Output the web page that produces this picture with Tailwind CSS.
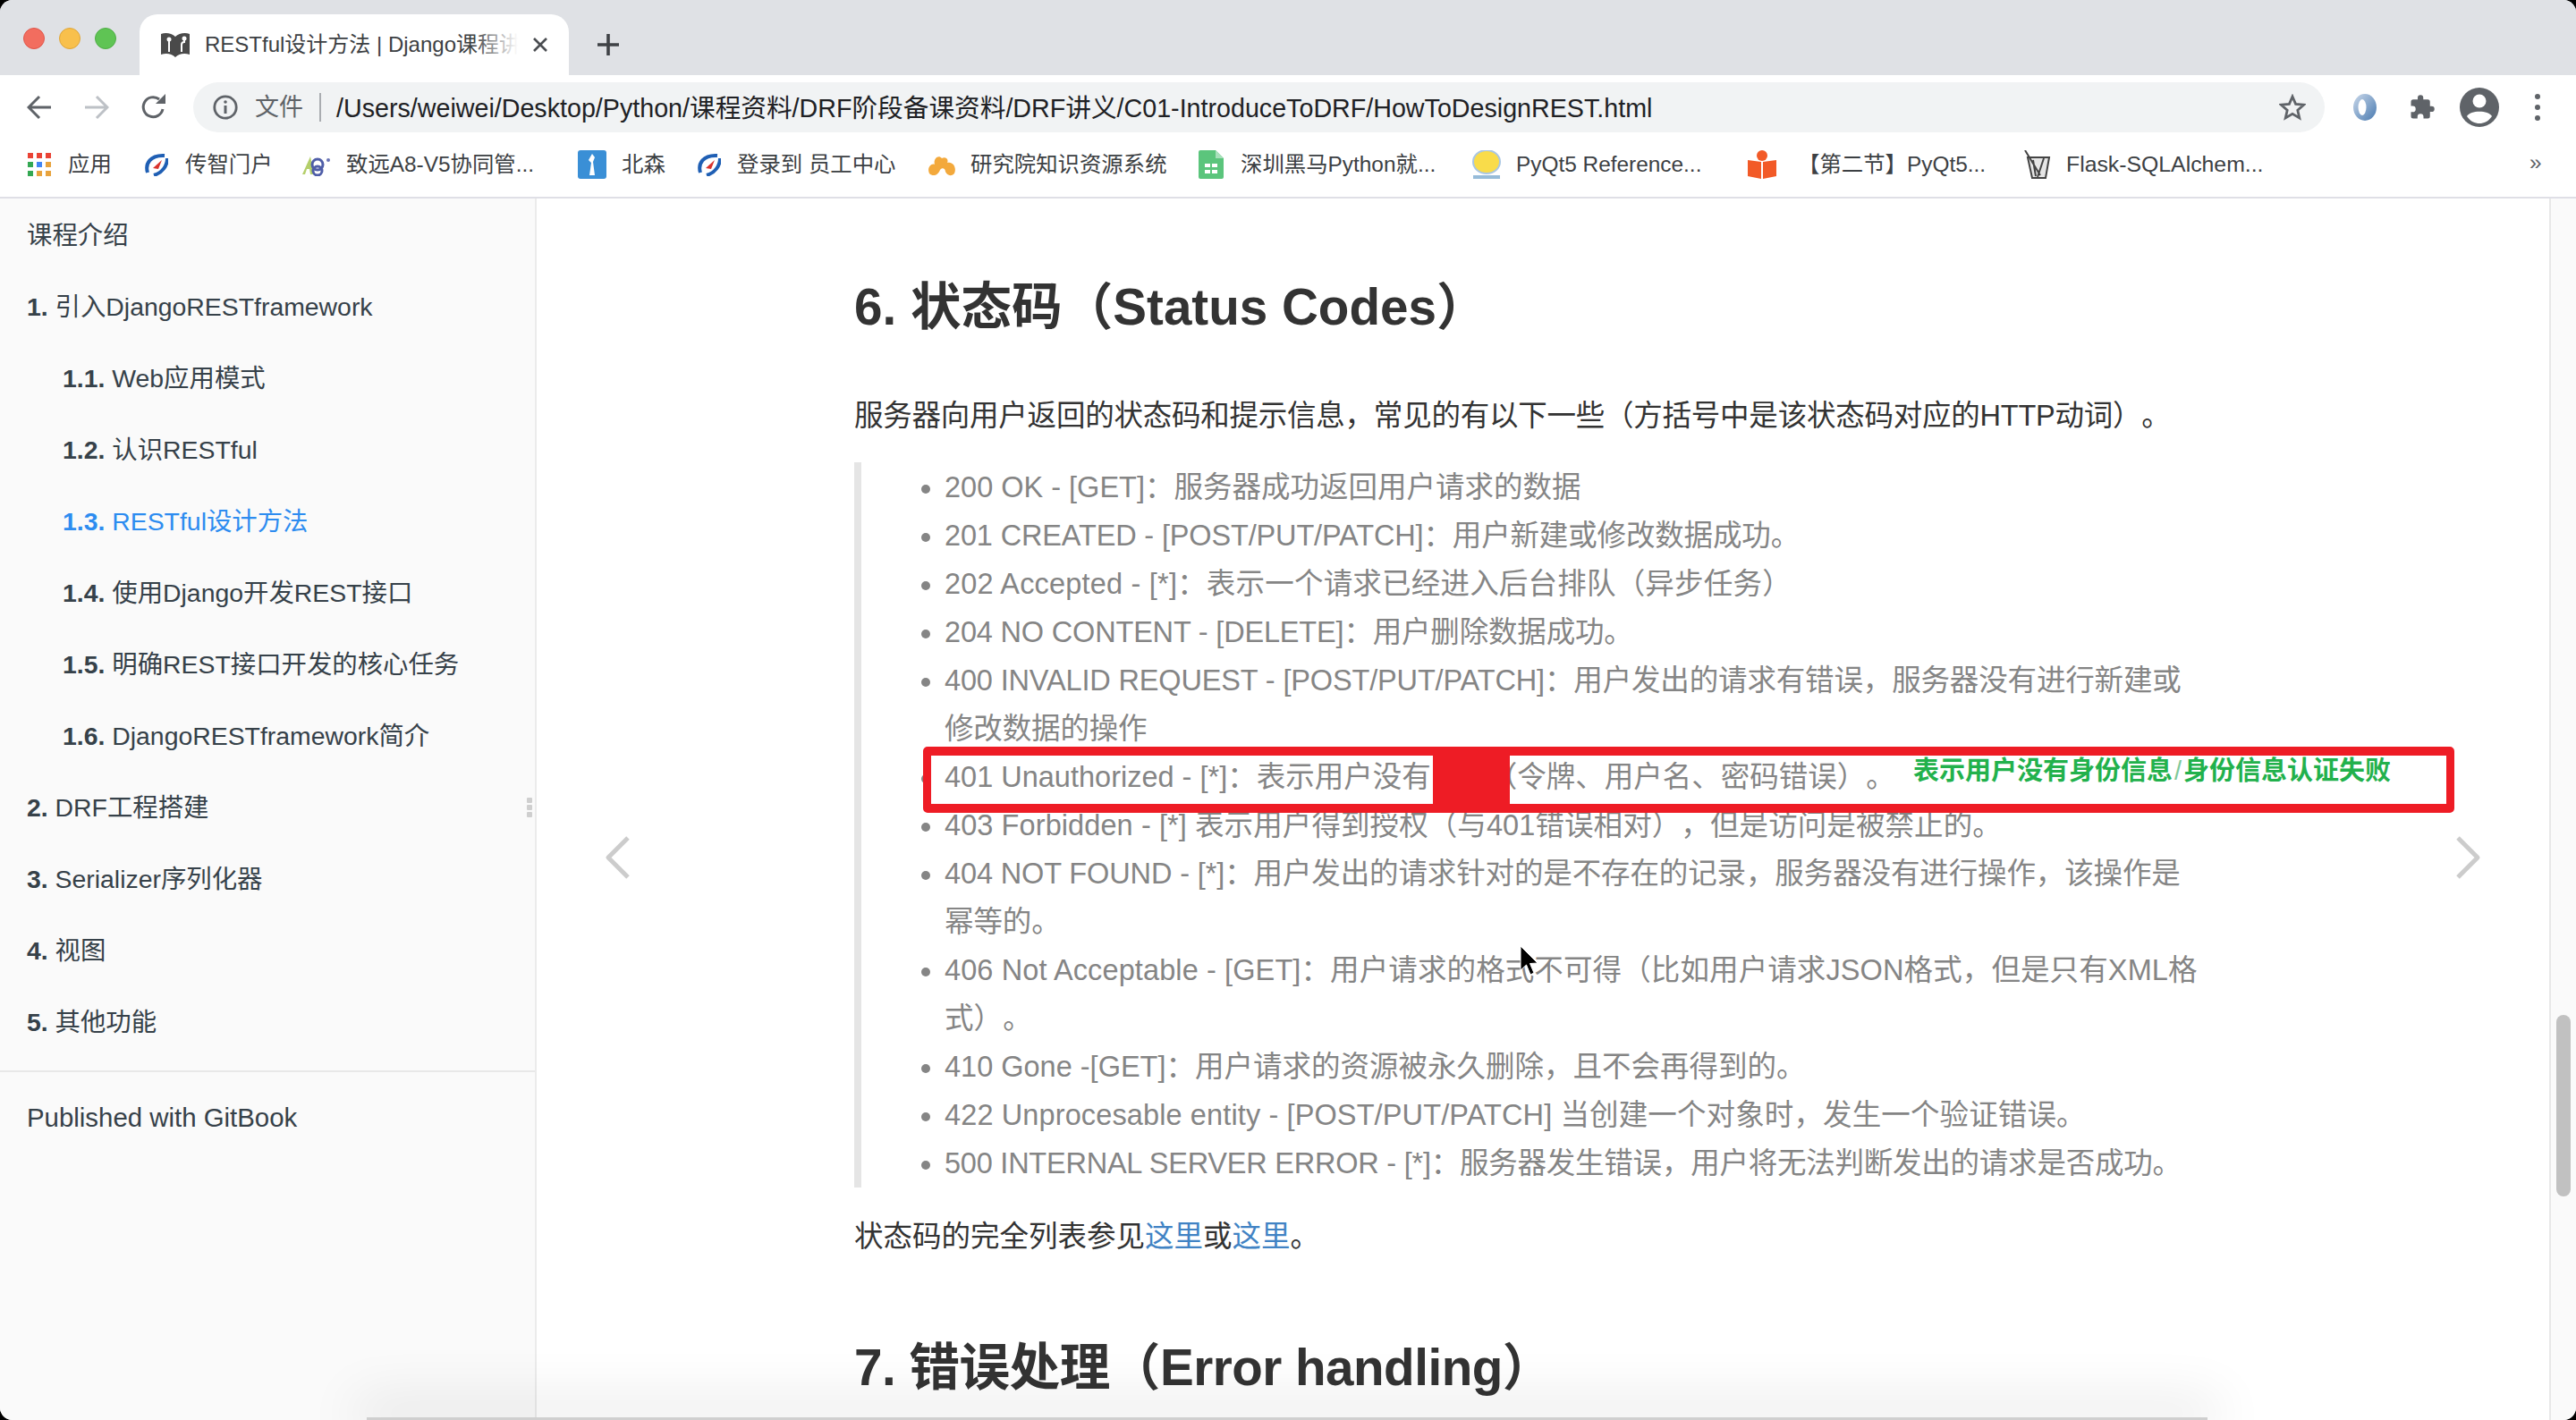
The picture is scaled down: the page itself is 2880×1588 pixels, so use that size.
<!doctype html>
<html lang="zh-CN">
<head>
<meta charset="utf-8">
<title>RESTful设计方法 | Django课程讲义</title>
<script src="https://cdn.jsdelivr.net/npm/@tailwindcss/browser@4"></script>
</head>
<body class="bg-black m-0">
<div class="relative w-[2880px] h-[1588px] overflow-hidden rounded-[14px] bg-white flex flex-col [text-spacing-trim:space-all] font-['Liberation_Sans','Noto_Sans_CJK_SC',sans-serif]">

  <!-- Tab strip -->
  <div class="h-[84px] shrink-0 bg-[#dfe1e5] flex items-end">
    <div class="w-[156px] h-[68px] shrink-0 flex items-start gap-[16px] pl-[26px] pt-[15px]">
      <span class="w-[24px] h-[24px] rounded-full bg-[#f26d5f] border border-[#e0564a]"></span>
      <span class="w-[24px] h-[24px] rounded-full bg-[#f8c04c] border border-[#dfa63a]"></span>
      <span class="w-[24px] h-[24px] rounded-full bg-[#5fc454] border border-[#4fae46]"></span>
    </div>
    <div class="w-[480px] h-[68px] shrink-0 bg-white rounded-t-[20px] flex items-center pl-[24px] relative">
      <svg width="32" height="28" viewBox="0 0 32 28" class="shrink-0">
        <path d="M0 2 C5 0 12 1 16 5 C20 1 27 0 32 2 V25 C26 23 20 24 16 28 C12 24 6 23 0 25 Z" fill="#4a4a4a"/>
        <path d="M9 22 V9 M23 22 V14 Q23 11 26 11 V7" stroke="#fff" stroke-width="2" fill="none"/>
        <circle cx="9" cy="8" r="2.5" fill="#fff"/><circle cx="26" cy="7" r="2.5" fill="#fff"/>
      </svg>
      <div class="ml-[17px] w-[350px] overflow-hidden whitespace-nowrap text-[24px] leading-[34px] text-[#3c4043] relative">RESTful设计方法 | Django课程讲义
        <span class="absolute right-0 top-0 h-full w-[50px] bg-linear-to-r from-white/0 to-white"></span>
      </div>
      <svg width="20" height="20" viewBox="0 0 20 20" class="absolute left-[438px] top-[24px]"><path d="M3 3 L17 17 M17 3 L3 17" stroke="#4a4d51" stroke-width="2.6"/></svg>
    </div>
    <div class="ml-[32px] h-[68px] flex items-center">
      <svg width="24" height="24" viewBox="0 0 24 24"><path d="M12 0 V24 M0 12 H24" stroke="#3f4246" stroke-width="3.6"/></svg>
    </div>
  </div>

  <!-- Toolbar -->
  <div class="h-[64px] shrink-0 bg-white flex items-start pt-[8px]">
    <div class="w-[216px] h-[56px] shrink-0 flex items-center">
      <svg width="28" height="28" viewBox="0 0 28 28" class="ml-[30px]"><path d="M27 14 H3 M14 2 L2 14 L14 26" stroke="#5f6368" stroke-width="3" fill="none"/></svg>
      <svg width="28" height="28" viewBox="0 0 28 28" class="ml-[36px]"><path d="M1 14 H25 M14 2 L26 14 L14 26" stroke="#bdc1c6" stroke-width="3" fill="none"/></svg>
      <svg width="30" height="30" viewBox="0 0 30 30" class="ml-[35px]"><path d="M25 17 A11 11 0 1 1 21 6" stroke="#5f6368" stroke-width="3" fill="none"/><path d="M17 11 H28 V0 Z" fill="#5f6368"/></svg>
    </div>
    <div class="w-[2383px] h-[56px] shrink-0 rounded-full bg-[#f1f3f4] flex items-center relative">
      <svg width="28" height="28" viewBox="0 0 28 28" class="ml-[22px]"><circle cx="14" cy="14" r="12.2" stroke="#5f6368" stroke-width="2.8" fill="none"/><path d="M14 12 V21" stroke="#5f6368" stroke-width="3"/><circle cx="14" cy="8" r="1.8" fill="#5f6368"/></svg>
      <span class="ml-[19px] text-[27px] leading-[36px] text-[#5f6368]">文件</span>
      <span class="ml-[18px] w-[2px] h-[32px] bg-[#a9acb0]"></span>
      <span class="ml-[17px] mt-[1px] text-[28.66px] leading-[36px] text-[#202124] whitespace-nowrap">/Users/weiwei/Desktop/Python/课程资料/DRF阶段备课资料/DRF讲义/C01-IntroduceToDRF/HowToDesignREST.html</span>
      <svg width="30" height="30" viewBox="0 0 30 30" class="absolute left-[2332px] top-[13px]"><path d="M15 3 L18.6 11.4 L27.6 12.2 L20.8 18.2 L22.8 27 L15 22.4 L7.2 27 L9.2 18.2 L2.4 12.2 L11.4 11.4 Z" stroke="#5f6368" stroke-width="2.8" fill="none"/></svg>
    </div>
    <div class="h-[56px] flex items-center">
      <svg width="32" height="32" viewBox="0 0 32 32" class="ml-[29px]"><defs><linearGradient id="ring" x1="0" y1="0" x2="1" y2="1"><stop offset="0" stop-color="#c9d8ea"/><stop offset="1" stop-color="#4a7ab0"/></linearGradient></defs><ellipse cx="16" cy="16" rx="13" ry="15" fill="url(#ring)"/><ellipse cx="13" cy="16" rx="4.5" ry="9" fill="#fff"/></svg>
      <svg width="30" height="30" viewBox="0 0 24 24" class="ml-[33px]"><path d="M20.5 11H19V7a2 2 0 0 0-2-2h-4V3.5a2.5 2.5 0 0 0-5 0V5H4a2 2 0 0 0-2 2v3.8h1.5a2.7 2.7 0 0 1 0 5.4H2V20a2 2 0 0 0 2 2h3.8v-1.5a2.7 2.7 0 0 1 5.4 0V22H17a2 2 0 0 0 2-2v-4h1.5a2.5 2.5 0 0 0 0-5z" fill="#5f6368"/></svg>
      <svg width="44" height="44" viewBox="0 0 44 44" class="ml-[27px]"><circle cx="22" cy="22" r="22" fill="#5f6368"/><circle cx="22" cy="15" r="7.5" fill="#fff"/><path d="M8 32 C12 25 32 25 36 32 C32 38 27 40 22 40 C17 40 12 38 8 32 Z" fill="#fff"/></svg>
      <span class="ml-[40px] flex flex-col gap-[6px]">
        <span class="w-[6px] h-[6px] rounded-full bg-[#5f6368]"></span>
        <span class="w-[6px] h-[6px] rounded-full bg-[#5f6368]"></span>
        <span class="w-[6px] h-[6px] rounded-full bg-[#5f6368]"></span>
      </span>
    </div>
  </div>

  <!-- Bookmarks -->
  <div class="h-[74px] shrink-0 bg-white border-b-2 border-[#dfdfe6] flex items-center pl-[31px] text-[24.4px] leading-[32px] text-[#3c4043] whitespace-nowrap">
    <div class="w-[131px] flex items-center">
      <svg width="26" height="26" viewBox="0 0 26 26" class="mr-[19px]">
        <rect x="0" y="0" width="6" height="6" fill="#ea4335"/><rect x="10" y="0" width="6" height="6" fill="#ea4335"/><rect x="20" y="0" width="6" height="6" fill="#ea4335"/>
        <rect x="0" y="10" width="6" height="6" fill="#34a853"/><rect x="10" y="10" width="6" height="6" fill="#4285f4"/><rect x="20" y="10" width="6" height="6" fill="#e8a33d"/>
        <rect x="0" y="20" width="6" height="6" fill="#34a853"/><rect x="10" y="20" width="6" height="6" fill="#e8a33d"/><rect x="20" y="20" width="6" height="6" fill="#e8a33d"/>
      </svg><span>应用</span>
    </div>
    <div class="w-[176px] flex items-center">
      <svg width="26" height="26" viewBox="0 0 26 26" class="mr-[19px]"><path d="M3 22 C0 12 6 2 22 3" stroke="#1f5fb4" stroke-width="4" fill="none"/><path d="M25 6 C25 14 20 22 10 25" stroke="#1f5fb4" stroke-width="4" fill="none"/><path d="M9 17 L19 8 L15 18 Z" fill="#d9322c"/></svg><span>传智门户</span>
    </div>
    <div class="w-[308px] flex items-center">
      <svg width="32" height="26" viewBox="0 0 32 26" class="mr-[17px]"><path d="M0 24 L9 4 L13 24 H9 L8 18 H5 L3 24 Z" fill="#b4cf6a"/><circle cx="17" cy="13" r="6" fill="none" stroke="#4f5ea8" stroke-width="3"/><circle cx="17" cy="20" r="5" fill="none" stroke="#4f5ea8" stroke-width="3"/><circle cx="29" cy="8" r="2" fill="#6a74b5"/></svg><span>致远A8-V5协同管...</span>
    </div>
    <div class="w-[134px] flex items-center">
      <span class="w-[32px] h-[32px] rounded-[3px] bg-[#3a8fd6] mr-[17px] flex items-center justify-center"><svg width="12" height="24" viewBox="0 0 12 24"><path d="M6 0 L9 4 L7 9 L9 24 H3 L5 10 L2 7 Z" fill="#fff"/></svg></span><span>北森</span>
    </div>
    <div class="w-[257px] flex items-center">
      <svg width="26" height="26" viewBox="0 0 26 26" class="mr-[18px]"><path d="M3 22 C0 12 6 2 22 3" stroke="#1f5fb4" stroke-width="4" fill="none"/><path d="M25 6 C25 14 20 22 10 25" stroke="#1f5fb4" stroke-width="4" fill="none"/><path d="M9 17 L19 8 L15 18 Z" fill="#d9322c"/></svg><span>登录到 员工中心</span>
    </div>
    <div class="w-[303px] flex items-center">
      <svg width="32" height="28" viewBox="0 0 32 28" class="mr-[16px]"><path d="M2 24 C-1 18 4 12 8 14 C6 8 12 2 16 7 C20 5 24 8 22 12 C28 10 33 17 30 24 C26 28 22 26 20 22 C20 18 16 17 14 20 C12 26 6 28 2 24 Z" fill="#f3a93c"/></svg><span>研究院知识资源系统</span>
    </div>
    <div class="w-[306px] flex items-center">
      <svg width="28" height="32" viewBox="0 0 28 32" class="mr-[19px]"><path d="M2 0 H19 L28 9 V30 a2 2 0 0 1-2 2 H2 a2 2 0 0 1-2-2 V2 a2 2 0 0 1 2-2 Z" fill="#5bc57c"/><path d="M19 0 L28 9 H19 Z" fill="#a8e0bb"/><rect x="7" y="15" width="6" height="4" fill="#fff"/><rect x="15" y="15" width="6" height="4" fill="#fff"/><rect x="7" y="22" width="6" height="4" fill="#fff"/><rect x="15" y="22" width="6" height="4" fill="#fff"/></svg><span>深圳黑马Python就...</span>
    </div>
    <div class="w-[308px] flex items-center">
      <svg width="32" height="32" viewBox="0 0 32 32" class="mr-[17px]"><ellipse cx="16" cy="13" rx="15" ry="13" fill="#f9dc4a" stroke="#a9c6e3" stroke-width="2"/><rect x="1" y="28" width="30" height="4" fill="#97bcd9"/></svg><span>PyQt5 Reference...</span>
    </div>
    <div class="w-[307px] flex items-center">
      <svg width="32" height="32" viewBox="0 0 32 32" class="mr-[24px]"><circle cx="16" cy="6" r="6" fill="#f25a27"/><path d="M0 11 L15 13 V32 L0 29 Z M32 11 L17 13 V32 L32 29 Z" fill="#f25a27"/></svg><span>【第二节】PyQt5...</span>
    </div>
    <div class="w-[567px] flex items-center">
      <svg width="35" height="32" viewBox="0 0 35 32" class="mr-[14px]"><path d="M6 8 H30 L26 31 H11 Z" fill="#e6e6e6" stroke="#444" stroke-width="2"/><path d="M3 0 L20 28 M24 9 L17 30 M12 11 L15 29" stroke="#444" stroke-width="2"/></svg><span class="text-[24.8px]">Flask-SQLAlchem...</span>
    </div>
    <span class="text-[#5f6368] -mt-[4px]">»</span>
  </div>

  <!-- Page -->
  <div class="flex-1 flex min-h-0 relative">
    <!-- Sidebar -->
    <aside class="w-[600px] shrink-0 bg-[#fafafa] border-r-2 border-[#ebebeb] text-[28.4px] leading-[40px] text-[#364149] relative">
      <ul class="pt-[1px]">
        <li class="py-[20px] pl-[30px]">课程介绍</li>
        <li class="py-[20px] pl-[30px]"><b>1.</b> 引入DjangoRESTframework</li>
        <li class="py-[20px] pl-[70px]"><b>1.1.</b> Web应用模式</li>
        <li class="py-[20px] pl-[70px]"><b>1.2.</b> 认识RESTful</li>
        <li class="py-[20px] pl-[70px] text-[#2d8cf0]"><b>1.3.</b> RESTful设计方法</li>
        <li class="py-[20px] pl-[70px]"><b>1.4.</b> 使用Django开发REST接口</li>
        <li class="py-[20px] pl-[70px]"><b>1.5.</b> 明确REST接口开发的核心任务</li>
        <li class="py-[20px] pl-[70px]"><b>1.6.</b> DjangoRESTframework简介</li>
        <li class="py-[20px] pl-[30px]"><b>2.</b> DRF工程搭建</li>
        <li class="py-[20px] pl-[30px]"><b>3.</b> Serializer序列化器</li>
        <li class="py-[20px] pl-[30px]"><b>4.</b> 视图</li>
        <li class="py-[20px] pl-[30px]"><b>5.</b> 其他功能</li>
      </ul>
      <div class="mt-[14px] border-t-2 border-[#e8e8e8] pt-[31px] pl-[30px] text-[29.4px]">Published with GitBook</div>
      <div class="absolute left-[589px] top-[670px] flex flex-col gap-[2px]">
        <span class="w-[6px] h-[6px] bg-[#cfcfcf] rounded-[1px]"></span>
        <span class="w-[6px] h-[6px] bg-[#cfcfcf] rounded-[1px]"></span>
        <span class="w-[6px] h-[6px] bg-[#cfcfcf] rounded-[1px]"></span>
      </div>
    </aside>

    <!-- Content -->
    <main class="flex-1 min-w-0 bg-white pl-[355px] text-[32.5px] leading-[54px] text-[#333333] relative">
      <h2 class="pt-[87px] text-[56.6px] leading-[70px] font-bold whitespace-nowrap">6. 状态码（Status Codes）</h2>
      <p class="mt-[59px] whitespace-nowrap tracking-[-0.23px]">服务器向用户返回的状态码和提示信息，常见的有以下一些（方括号中是该状态码对应的HTTP动词）。</p>
      <blockquote class="mt-[25px] pt-[1px] border-l-[8px] border-[#e5e5e5] pl-[93px] text-[#858585] whitespace-nowrap">
        <ul class="list-disc list-outside">
          <li>200 OK - [GET]：服务器成功返回用户请求的数据</li>
          <li class="tracking-[-0.15px]">201 CREATED - [POST/PUT/PATCH]：用户新建或修改数据成功。</li>
          <li class="tracking-[0.2px]">202 Accepted - [*]：表示一个请求已经进入后台排队（异步任务）</li>
          <li class="tracking-[-0.18px]">204 NO CONTENT - [DELETE]：用户删除数据成功。</li>
          <li class="tracking-[-0.15px]">400 INVALID REQUEST - [POST/PUT/PATCH]：用户发出的请求有错误，服务器没有进行新建或<br>修改数据的操作</li>
          <li>401 Unauthorized - [*]：表示用户没有<span class="inline-block w-[64px]"></span>（令牌、用户名、密码错误）。</li>
          <li class="tracking-[0.09px]">403 Forbidden - [*] 表示用户得到授权（与401错误相对），但是访问是被禁止的。</li>
          <li class="tracking-[-0.12px]">404 NOT FOUND - [*]：用户发出的请求针对的是不存在的记录，服务器没有进行操作，该操作是<br>幂等的。</li>
          <li class="tracking-[0.11px]">406 Not Acceptable - [GET]：用户请求的格式不可得（比如用户请求JSON格式，但是只有XML格<br>式）。</li>
          <li>410 Gone -[GET]：用户请求的资源被永久删除，且不会再得到的。</li>
          <li class="tracking-[0.12px]">422 Unprocesable entity - [POST/PUT/PATCH] 当创建一个对象时，发生一个验证错误。</li>
          <li class="tracking-[-0.23px]">500 INTERNAL SERVER ERROR - [*]：服务器发生错误，用户将无法判断发出的请求是否成功。</li>
        </ul>
      </blockquote>
      <p class="mt-[28px] whitespace-nowrap">状态码的完全列表参见<a class="text-[#4183c4]">这里</a>或<a class="text-[#4183c4]">这里</a>。</p>
      <h2 class="mt-[85px] text-[56.6px] leading-[70px] font-bold whitespace-nowrap tracking-[-0.5px]">7. 错误处理（Error handling）</h2>

      <svg width="30" height="50" viewBox="0 0 30 50" class="absolute left-[76px] top-[713px]"><path d="M26 2 L4 24 L26 46" stroke="#cccccc" stroke-width="5" fill="none" stroke-linejoin="round"/></svg>
      <svg width="30" height="50" viewBox="0 0 30 50" class="absolute left-[2144px] top-[713px]"><path d="M4 2 L26 24 L4 46" stroke="#cccccc" stroke-width="5" fill="none" stroke-linejoin="round"/></svg>
    </main>

    <!-- Scrollbar -->
    <div class="w-[30px] shrink-0 bg-[#fafafa] border-l-2 border-[#e8e8e8] relative">
      <div class="absolute left-[6px] top-[913px] w-[16px] h-[203px] rounded-full bg-[#c1c1c1]"></div>
    </div>

    <!-- shadow of a window underneath, showing along the bottom edge -->
    <div class="absolute left-[410px] w-[2058px] bottom-0 h-[3px] bg-[#cfcfcf] shadow-[0_-6px_60px_12px_rgba(0,0,0,0.12)]"></div>
  </div>

  <!-- Annotation drawn over the screenshot -->
  <div class="absolute left-[1032px] top-[835px] w-[1712px] h-[74px] border-x-[9px] border-y-[10px] border-[#ee1c25] rounded-[5px]"></div>
  <div class="absolute left-[1602px] top-[845px] w-[86px] h-[54px] bg-[#ee1c25]"></div>
  <div class="absolute left-[2139px] top-[842px] text-[29px] leading-[40px] font-bold text-[#22b14c] whitespace-nowrap">表示用户没有身份信息<span class="font-normal text-[#7fc99a] mx-[2px]">/</span>身份信息认证失败</div>

  <!-- Mouse cursor -->
  <svg width="24" height="36" viewBox="0 0 24 36" class="absolute left-[1699px] top-[1057px]"><path d="M1 1 V28 L7.5 22 L12 33 L16 31 L11.5 20.5 L20 20 Z" fill="#000" stroke="#fff" stroke-width="1"/></svg>
</div>
</body>
</html>
